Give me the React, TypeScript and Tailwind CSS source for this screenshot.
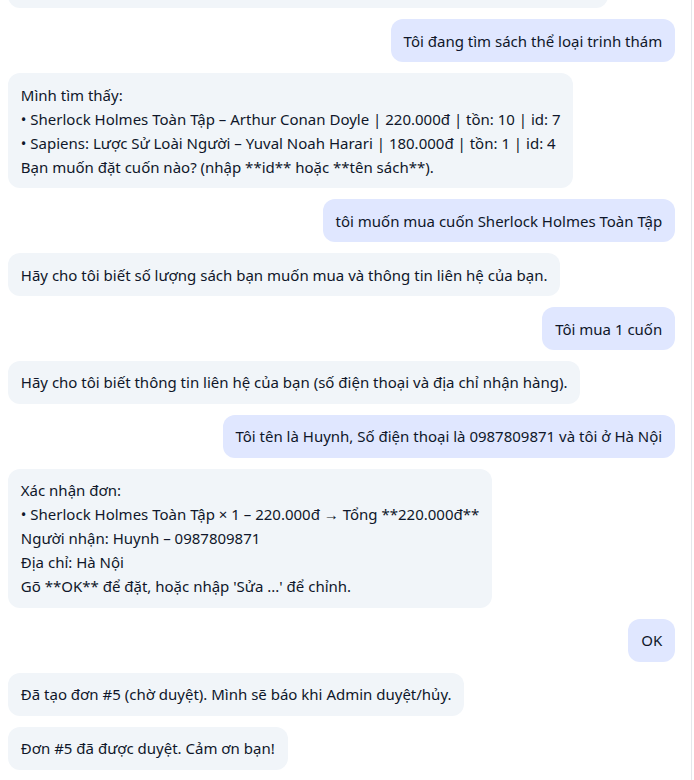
const messages: { from: "user" | "bot"; text: string }[] = [
  {
    from: "bot",
    text: "Xin chào! Mình là trợ lý bán sách. Bạn có thể hỏi theo tên sách, tác giả hoặc thể loại, mình sẽ tìm giúp bạn những cuốn sách phù hợp nhất.",
  },
  { from: "user", text: "Tôi đang tìm sách thể loại trinh thám" },
  {
    from: "bot",
    text: "Mình tìm thấy:\n• Sherlock Holmes Toàn Tập – Arthur Conan Doyle | 220.000đ | tồn: 10 | id: 7\n• Sapiens: Lược Sử Loài Người – Yuval Noah Harari | 180.000đ | tồn: 1 | id: 4\nBạn muốn đặt cuốn nào? (nhập **id** hoặc **tên sách**).",
  },
  { from: "user", text: "tôi muốn mua cuốn Sherlock Holmes Toàn Tập" },
  {
    from: "bot",
    text: "Hãy cho tôi biết số lượng sách bạn muốn mua và thông tin liên hệ của bạn.",
  },
  { from: "user", text: "Tôi mua 1 cuốn" },
  {
    from: "bot",
    text: "Hãy cho tôi biết thông tin liên hệ của bạn (số điện thoại và địa chỉ nhận hàng).",
  },
  {
    from: "user",
    text: "Tôi tên là Huynh, Số điện thoại là 0987809871 và tôi ở Hà Nội",
  },
  {
    from: "bot",
    text: "Xác nhận đơn:\n• Sherlock Holmes Toàn Tập × 1 – 220.000đ → Tổng **220.000đ**\nNgười nhận: Huynh – 0987809871\nĐịa chỉ: Hà Nội\nGõ **OK** để đặt, hoặc nhập 'Sửa ...' để chỉnh.",
  },
  { from: "user", text: "OK" },
  {
    from: "bot",
    text: "Đã tạo đơn #5 (chờ duyệt). Mình sẽ báo khi Admin duyệt/hủy.",
  },
  { from: "bot", text: "Đơn #5 đã được duyệt. Cảm ơn bạn!" },
];

function Bubble({ from, text }: { from: "user" | "bot"; text: string }) {
  const isUser = from === "user";
  return (
    <div
      className={
        isUser
          ? "self-end shrink-0 max-w-[90%] whitespace-pre-line rounded-xl bg-[#e0e7ff] px-[12.8px] py-[9.6px]"
          : "self-start shrink-0 max-w-[90%] whitespace-pre-line rounded-xl bg-[#f1f5f9] px-[12.8px] py-[9.6px]"
      }
    >
      {text}
    </div>
  );
}

export default function App() {
  return (
    <div className="w-[694px] h-[780px] bg-white">
      <div className="w-[692px] h-[780px] overflow-hidden border-r border-[#e5e7eb] flex flex-col justify-end gap-[10.8px] pl-2 pr-4 pb-[10px] font-['Noto_Sans',sans-serif] text-[15px] leading-[24px] text-[#0f172a]">
        {messages.map((m, i) => (
          <Bubble key={i} from={m.from} text={m.text} />
        ))}
      </div>
    </div>
  );
}
